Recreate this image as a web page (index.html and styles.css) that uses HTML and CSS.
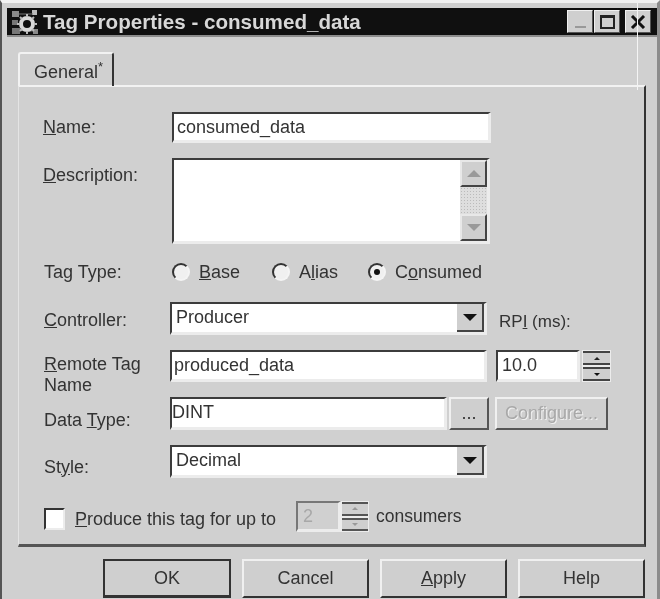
FILE: index.html
```html
<!DOCTYPE html>
<html lang="en">

<head>
    <meta charset="UTF-8">
    <title>Tag Properties - consumed_data</title>
    <link rel="stylesheet" href="styles.css">
</head>

<body>
    <div class="window">
        <div class="titlebar">
            <svg class="app-icon" width="30" height="28" viewBox="0 0 30 28">
                <rect x="1" y="3" width="7" height="6" fill="#8a8a8a"/>
                <rect x="1" y="12" width="6" height="5" fill="#777"/>
                <rect x="1" y="20" width="8" height="6" fill="#777"/>
                <rect x="21" y="2" width="5" height="5" fill="#bbb"/>
                <rect x="22" y="21" width="5" height="5" fill="#888"/>
                <path d="M8 6l14 0M8 22l14 1" stroke="#777" stroke-width="1"/>
                <circle cx="16" cy="16" r="6" fill="none" stroke="#d8d8d8" stroke-width="4"/>
                <circle cx="16" cy="16" r="1.5" fill="#111"/>
                <path d="M16 6v3M16 23v3M6 16h3M23 16h3M9 9l2 2M21 21l2 2M23 9l-2 2M9 23l2-2" stroke="#bbb" stroke-width="2"/>
            </svg>
            <span class="title">Tag Properties - consumed_data</span>
            <div class="win-buttons">
                <button class="win-btn min"><span class="min-bar"></span></button>
                <button class="win-btn max"><span class="max-box"></span></button>
                <button class="win-btn close">
                    <svg width="16" height="14" viewBox="0 0 16 14"><path d="M2 1l12 12M14 1L2 13" stroke="#111" stroke-width="3"/></svg>
                </button>
            </div>
        </div>

        <div class="tabs">
            <div class="tab">General<sup>*</sup></div>
        </div>

        <div class="panel">
            <div class="row row-name">
                <label class="label"><u>N</u>ame:</label>
                <div class="field field-name">consumed_data</div>
            </div>

            <div class="row row-desc">
                <label class="label"><u>D</u>escription:</label>
                <div class="field field-desc">
                    <div class="scrollbar">
                        <div class="scroll-btn"><span class="tri up"></span></div>
                        <div class="scroll-track"></div>
                        <div class="scroll-btn"><span class="tri down"></span></div>
                    </div>
                </div>
            </div>

            <div class="row row-type">
                <label class="label label-type">Tag Type:</label>
                <div class="radio radio-base"><span class="dot"></span><span><u>B</u>ase</span></div>
                <div class="radio radio-alias"><span class="dot"></span><span>A<u>l</u>ias</span></div>
                <div class="radio"><span class="dot checked"></span><span>C<u>o</u>nsumed</span></div>
            </div>

            <div class="row row-ctrl">
                <label class="label label-wide label-ctrl"><u>C</u>ontroller:</label>
                <div class="field select">Producer<span class="drop"><span class="tri down dark"></span></span></div>
                <span class="rpi">RP<u>I</u> (ms):</span>
            </div>

            <div class="row row-remote">
                <label class="label label-wide label-two"><u>R</u>emote Tag<br>Name</label>
                <div class="field field-remote">produced_data</div>
                <div class="field field-rpi">10.0</div>
                <div class="spin">
                    <div class="spin-btn"><span class="tri up dark small"></span></div>
                    <div class="spin-btn"><span class="tri down dark small"></span></div>
                </div>
            </div>

            <div class="row row-data">
                <label class="label label-wide label-low">Data <u>T</u>ype:</label>
                <div class="field field-data">DINT</div>
                <button class="btn dots">...</button>
                <button class="btn configure">Configure...</button>
            </div>

            <div class="row row-style">
                <label class="label label-wide label-low">St<u>y</u>le:</label>
                <div class="field select">Decimal<span class="drop"><span class="tri down dark"></span></span></div>
            </div>

            <div class="row row-produce">
                <span class="checkbox"></span>
                <span class="produce-text"><u>P</u>roduce this tag for up to</span>
                <div class="field field-count">2</div>
                <div class="spin spin-off">
                    <div class="spin-btn"><span class="tri up small"></span></div>
                    <div class="spin-btn"><span class="tri down small"></span></div>
                </div>
                <span class="consumers">consumers</span>
            </div>
        </div>

        <div class="actions">
            <button class="action default">OK</button>
            <button class="action">Cancel</button>
            <button class="action"><u>A</u>pply</button>
            <button class="action">Help</button>
        </div>

        <div class="scratch"></div>
    </div>
</body>

</html>
```

FILE: styles.css
```css
html,
body {
    margin: 0px;
    padding: 0px;
    background-color: #d0d0d0;
}

.window {
    position: relative;
    box-sizing: border-box;
    width: 660px;
    height: 599px;
    overflow: hidden;
    padding: 5px 0px 0px 5px;
    background-color: #d0d0d0;
    color: #333333;
    font-family: "Liberation Sans", Arial, sans-serif;
    font-size: 18px;
    border-top: 3px solid #f2f2f2;
    border-left: 2px solid #555555;
    border-right: 3px solid #8c8c8c;
    filter: blur(0.6px);
}

.titlebar {
    display: flex;
    align-items: center;
    height: 27px;
    padding-left: 4px;
    background-color: #101010;
    color: #d8d8d8;
    border-bottom: 2px solid #8c8c8c;
}

.app-icon {
    flex: none;
}

.title {
    margin-left: 2px;
    font-size: 20.6px;
    font-weight: bold;
    white-space: nowrap;
}

.win-buttons {
    display: flex;
    margin-left: auto;
    margin-right: 6px;
}

.win-btn {
    display: flex;
    align-items: center;
    justify-content: center;
    box-sizing: border-box;
    width: 26px;
    height: 23px;
    padding: 0px;
    margin-left: 1px;
    background-color: #cfcfcf;
    border: 1px solid;
    border-color: #f0f0f0 #555555 #555555 #f0f0f0;
}

.close {
    margin-left: 5px;
}

.min-bar {
    width: 11px;
    height: 2px;
    margin-top: 11px;
    background-color: #999999;
}

.max-box {
    box-sizing: border-box;
    width: 15px;
    height: 14px;
    border: 2px solid #222222;
    border-top-width: 3px;
}

.tabs {
    display: flex;
    height: 48px;
    padding-top: 15px;
    padding-left: 11px;
    box-sizing: border-box;
}

.tab {
    box-sizing: border-box;
    width: 96px;
    height: 34px;
    padding: 8px 0px 0px 14px;
    font-size: 18px;
    border-top: 2px solid #f2f2f2;
    border-left: 2px solid #f2f2f2;
    border-right: 2px solid #333333;
    border-radius: 3px 3px 0px 0px;
    z-index: 1;
}

.tab sup {
    font-size: 13px;
    line-height: 0;
}

.panel {
    box-sizing: border-box;
    width: 628px;
    height: 462px;
    margin-left: 11px;
    padding: 25px 0px 0px 24px;
    border-top: 2px solid #f2f2f2;
    border-left: 1px solid #e4e4e4;
    border-right: 2px solid #333333;
    border-bottom: 3px solid #555555;
}

.row {
    display: flex;
    align-items: center;
}

.label {
    flex: none;
    width: 129px;
}

.label-type {
    padding-left: 1px;
    width: 128px;
}

.label-wide {
    padding-left: 1px;
    width: 126px;
}

.label-ctrl {
    padding-top: 4px;
}

.label-two {
    align-self: flex-start;
    margin-top: 4px;
    line-height: 21px;
}

.label-low {
    padding-top: 13px;
}

.row-name {
    height: 31px;
}

.row-desc {
    align-items: flex-start;
    height: 86px;
    margin-top: 15px;
}

.row-desc .label {
    padding-top: 7px;
}

.row-type {
    height: 24px;
    margin-top: 16px;
}

.row-ctrl {
    height: 33px;
    margin-top: 18px;
}

.row-remote {
    height: 32px;
    margin-top: 15px;
}

.row-data {
    height: 33px;
    margin-top: 15px;
}

.row-style {
    height: 33px;
    margin-top: 15px;
}

.row-style .label-low {
    padding-top: 11px;
}

.row-produce {
    height: 31px;
    margin-top: 23px;
}

.field {
    box-sizing: border-box;
    height: 100%;
    padding-left: 3px;
    line-height: 26px;
    white-space: nowrap;
    background-color: #ffffff;
    border-style: solid;
    border-width: 2px 3px 3px 2px;
    border-color: #3c3c3c #ececec #ececec #3c3c3c;
}

.field-name {
    width: 319px;
}

.field-desc {
    display: flex;
    justify-content: flex-end;
    width: 318px;
    padding: 0px;
}

.scrollbar {
    display: flex;
    flex-direction: column;
    width: 27px;
}

.scroll-btn {
    display: flex;
    flex: none;
    align-items: center;
    justify-content: center;
    box-sizing: border-box;
    height: 27px;
    background-color: #cfcfcf;
    border: 2px solid;
    border-color: #e8e8e8 #444444 #444444 #e8e8e8;
}

.scroll-track {
    flex: 1;
    background-color: #dedede;
    background-image: radial-gradient(#bbbbbb 1px, transparent 1px);
    background-size: 3px 3px;
}

.tri {
    width: 0px;
    height: 0px;
    border-left: 7px solid transparent;
    border-right: 7px solid transparent;
}

.tri.up {
    border-bottom: 7px solid #999999;
}

.tri.down {
    border-top: 7px solid #999999;
}

.tri.up.dark {
    border-bottom-color: #222222;
}

.tri.down.dark {
    border-top-color: #111111;
}

.tri.small {
    border-left-width: 3px;
    border-right-width: 3px;
}

.tri.up.small {
    border-bottom-width: 3px;
}

.tri.down.small {
    border-top-width: 3px;
}

.radio {
    display: flex;
    align-items: center;
    gap: 9px;
}

.radio-base {
    width: 100px;
}

.radio-alias {
    width: 96px;
}

.dot {
    display: flex;
    align-items: center;
    justify-content: center;
    box-sizing: border-box;
    width: 18px;
    height: 18px;
    background-color: #f0f0f0;
    border: 2px solid;
    border-color: #333333 #f4f4f4 #f4f4f4 #333333;
    border-radius: 50%;
}

.dot.checked::after {
    content: "";
    width: 6px;
    height: 6px;
    background-color: #111111;
    border-radius: 50%;
}

.select {
    display: flex;
    justify-content: space-between;
    width: 317px;
    padding-left: 4px;
    padding-right: 0px;
    line-height: 27px;
}

.drop {
    display: flex;
    align-items: center;
    justify-content: center;
    box-sizing: border-box;
    width: 27px;
    height: 100%;
    background-color: #cfcfcf;
    border-right: 2px solid #444444;
    border-bottom: 2px solid #444444;
}

.rpi {
    margin-left: 12px;
    padding-top: 6px;
    font-size: 17px;
}

.field-remote {
    width: 317px;
    padding-left: 2px;
}

.field-rpi {
    width: 84px;
    margin-left: 9px;
    padding-left: 4px;
}

.spin {
    display: flex;
    flex-direction: column;
    gap: 2px;
    box-sizing: border-box;
    width: 29px;
    height: 100%;
    margin-left: 2px;
    padding: 1px;
    background-color: #ececec;
}

.spin-btn {
    display: flex;
    flex: 1;
    align-items: center;
    justify-content: center;
    background-color: #cfcfcf;
    border-top: 2px solid #444444;
    border-bottom: 2px solid #444444;
}

.spin-off .spin-btn {
    border-color: #555555;
}

.field-data {
    width: 277px;
    padding-left: 0px;
}

.btn {
    box-sizing: border-box;
    height: 100%;
    padding: 0px;
    font-family: inherit;
    font-size: 18px;
    color: #333333;
    background-color: #cfcfcf;
    border: 2px solid;
    border-color: #f0f0f0 #555555 #555555 #f0f0f0;
}

.dots {
    width: 40px;
    margin-left: 2px;
}

.configure {
    width: 113px;
    margin-left: 6px;
    color: #a8a8a8;
    text-shadow: 1px 1px 0px #f0f0f0;
}

.checkbox {
    flex: none;
    box-sizing: border-box;
    width: 21px;
    height: 22px;
    margin-top: 4px;
    margin-left: 1px;
    background-color: #ffffff;
    border: 2px solid;
    border-color: #333333 #ececec #ececec #333333;
}

.produce-text {
    width: 221px;
    margin-left: 10px;
    padding-top: 5px;
    white-space: nowrap;
}

.field-count {
    width: 45px;
    padding-left: 5px;
    color: #a8a8a8;
    background-color: #d0d0d0;
    border-color: #777777 #ececec #ececec #777777;
}

.spin-off {
    width: 28px;
    margin-left: 0px;
}

.consumers {
    margin-left: 7px;
    font-size: 17.5px;
    white-space: nowrap;
}

.actions {
    display: flex;
    gap: 11px;
    margin-top: 12px;
    padding-left: 96px;
}

.action {
    box-sizing: border-box;
    flex: none;
    width: 127px;
    height: 39px;
    padding: 0px;
    font-family: inherit;
    font-size: 18px;
    color: #333333;
    background-color: #cfcfcf;
    border: 2px solid;
    border-color: #f0f0f0 #333333 #333333 #f0f0f0;
}

.default {
    width: 128px;
    border-color: #333333;
    border-bottom-width: 3px;
}

/* scratch on the scan, lies over the title bar */
.scratch {
    position: absolute;
    top: 0px;
    left: 635px;
    width: 1px;
    height: 87px;
    background-color: #f4f4f4;
}
```
